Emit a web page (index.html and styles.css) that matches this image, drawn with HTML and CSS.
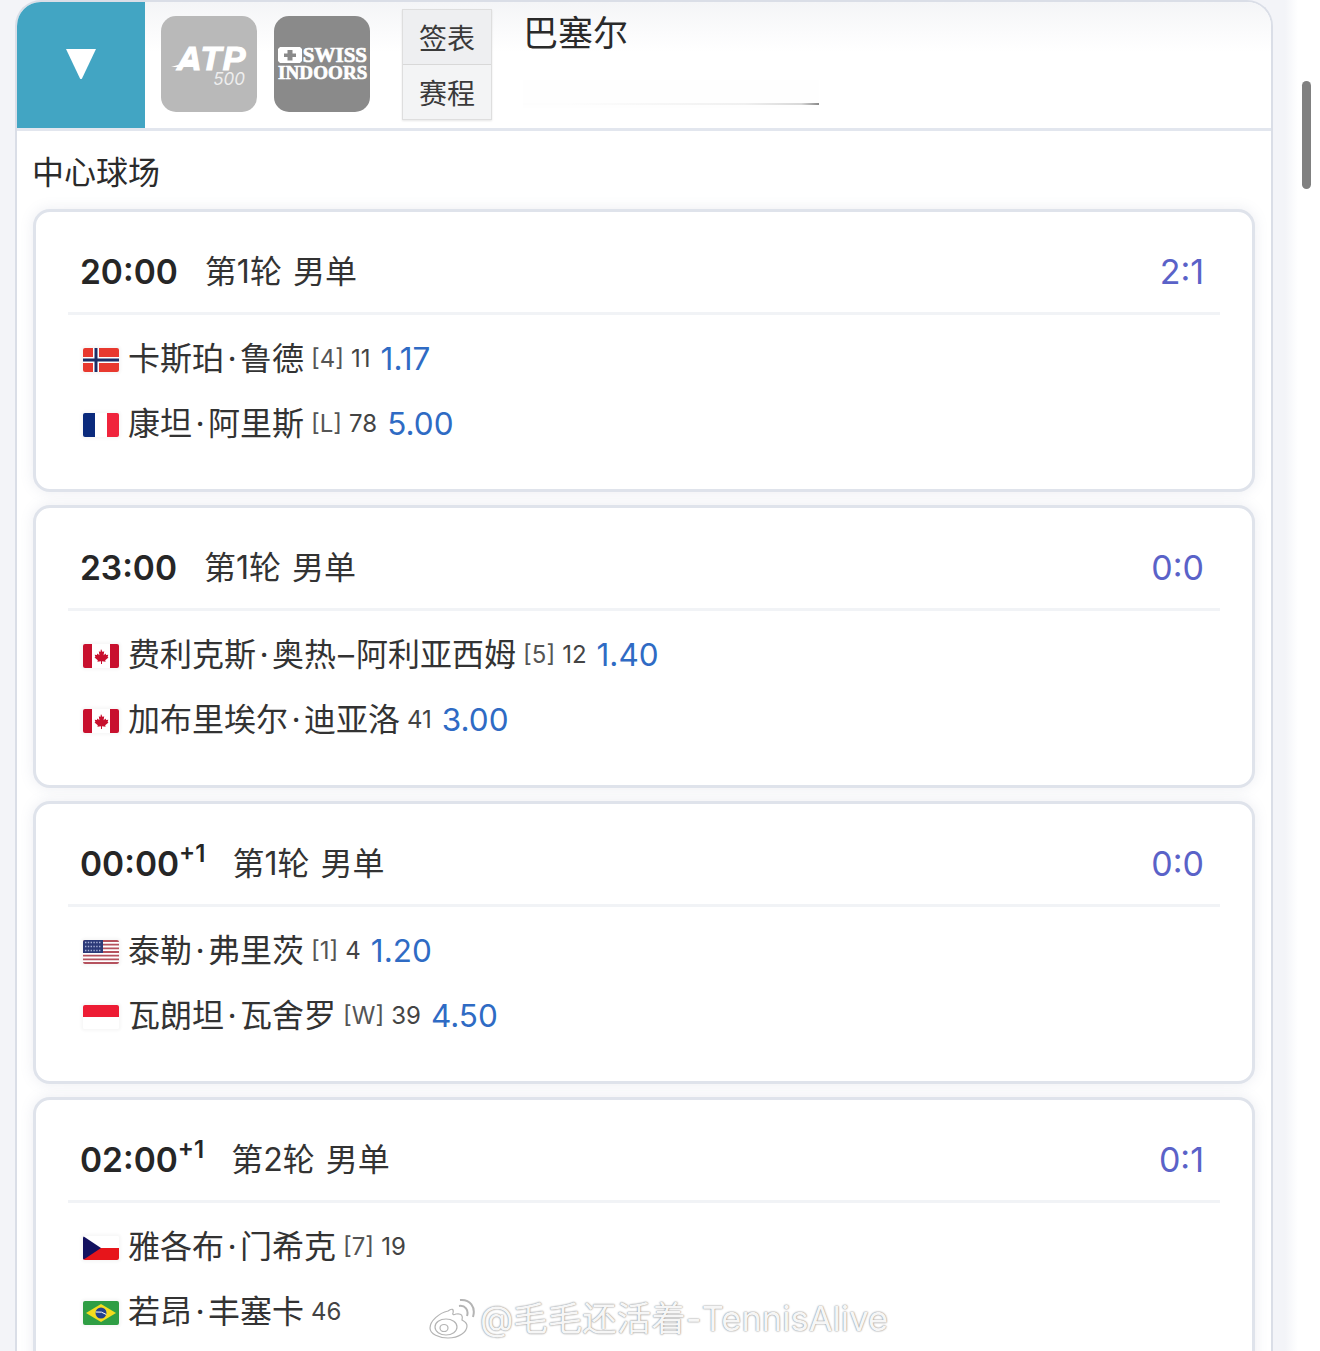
FILE: index.html
```html
<!DOCTYPE html>
<html lang="zh-CN">
<head>
<meta charset="utf-8">
<title>巴塞尔</title>
<link rel="stylesheet" href="styles.css">
</head>
<body>
<svg class="defs" width="0" height="0" aria-hidden="true">
  <symbol id="flag-ca" viewBox="0 0 36 24">
    <rect width="36" height="24" fill="#fff"/>
    <rect width="9" height="24" fill="#c8102e"/>
    <rect x="27" width="9" height="24" fill="#c8102e"/>
    <path d="M18 5l1.600 3 1.600-.8-.6 4 2-1.600.5 1.500 2.200-.4-.7 2.300.9.5-3.300 2.800.4 1.500-3.600-.5V20h-1v-2.700l-3.600.5.4-1.500-3.300-2.800.9-.5-.7-2.300 2.200.4.5-1.500 2 1.600-.6-4 1.600.8z" fill="#c8102e"/>
  </symbol>
</svg>

<div class="panel">
  <header class="top">
    <div class="toggle"><svg class="tri" viewBox="0 0 32 32"><path d="M1 1h30L17 30.500q-1 1-2 0z" fill="#fff"/></svg></div>
    <div class="logo logo-atp">
      <span class="atp">ATP</span>
      <span class="atp-num">500</span>
    </div>
    <div class="logo logo-swiss">
      <div class="swiss-line"><svg class="cross" viewBox="0 0 24 16"><path fill="#fff" fill-rule="evenodd" d="M2 0h20l2 2v12l-2 2H2l-2-2V2zM9.500 3v3.500H6v3.500h3.500V13.500h5V10H18V6.500h-3.500V3z"/></svg><span>SWISS</span></div>
      <div class="swiss-line"><span>INDOORS</span></div>
    </div>
    <div class="tabs">
      <div class="tab tab-a">签表</div>
      <div class="tab tab-b">赛程</div>
    </div>
    <div class="place">
      <div class="place-name">巴塞尔</div>
      <div class="place-blur"></div>
    </div>
  </header>

  <h2 class="court">中心球场</h2>

  <section class="card">
    <div class="head"><span class="time">20:00</span><span class="round">第1轮 男单</span><span class="score">2:1</span></div>
    <div class="row">
      <span class="flag"><svg viewBox="0 0 36 24"><rect width="36" height="24" fill="#e8392f"/><path d="M0 12h36M13 0v24" stroke="#fff" stroke-width="6"/><path d="M0 12h36M13 0v24" stroke="#1c2f66" stroke-width="3"/></svg></span>
      <span class="name">卡斯珀<i>·</i>鲁德</span><span class="seed">[4]</span><span class="rank">11</span><span class="odds">1.17</span>
    </div>
    <div class="row">
      <span class="flag"><svg viewBox="0 0 36 24"><rect width="36" height="24" fill="#fff"/><rect width="12" height="24" fill="#0a2a7c"/><rect x="24" width="12" height="24" fill="#f0243c"/></svg></span>
      <span class="name">康坦<i>·</i>阿里斯</span><span class="seed">[L]</span><span class="rank">78</span><span class="odds">5.00</span>
    </div>
  </section>

  <section class="card">
    <div class="head"><span class="time">23:00</span><span class="round">第1轮 男单</span><span class="score">0:0</span></div>
    <div class="row">
      <span class="flag"><svg viewBox="0 0 36 24"><use href="#flag-ca"/></svg></span>
      <span class="name">费利克斯<i>·</i>奥热<b>–</b>阿利亚西姆</span><span class="seed">[5]</span><span class="rank">12</span><span class="odds">1.40</span>
    </div>
    <div class="row">
      <span class="flag"><svg viewBox="0 0 36 24"><use href="#flag-ca"/></svg></span>
      <span class="name">加布里埃尔<i>·</i>迪亚洛</span><span class="rank">41</span><span class="odds">3.00</span>
    </div>
  </section>

  <section class="card">
    <div class="head"><span class="time">00:00<sup>+1</sup></span><span class="round">第1轮 男单</span><span class="score">0:0</span></div>
    <div class="row">
      <span class="flag"><svg viewBox="0 0 36 24"><rect width="36" height="24" fill="#fff"/><path d="M0 1h36M0 4.700h36M0 8.400h36M0 12h36M0 15.700h36M0 19.400h36M0 23h36" stroke="#b5525e" stroke-width="1.800"/><rect width="20" height="13" fill="#2c3a78"/><path d="M2 2.500h16M2 6.500h16M2 10.500h16" stroke="#a9b2d6" stroke-width="1.400" stroke-dasharray="1.400 1.400"/></svg></span>
      <span class="name">泰勒<i>·</i>弗里茨</span><span class="seed">[1]</span><span class="rank">4</span><span class="odds">1.20</span>
    </div>
    <div class="row">
      <span class="flag"><svg viewBox="0 0 36 24"><rect width="36" height="24" fill="#fff"/><rect width="36" height="12" fill="#ed1c34"/></svg></span>
      <span class="name">瓦朗坦<i>·</i>瓦舍罗</span><span class="seed">[W]</span><span class="rank">39</span><span class="odds">4.50</span>
    </div>
  </section>

  <section class="card">
    <div class="head"><span class="time">02:00<sup>+1</sup></span><span class="round">第2轮 男单</span><span class="score">0:1</span></div>
    <div class="row">
      <span class="flag"><svg viewBox="0 0 36 24"><rect width="36" height="12" fill="#fff"/><rect y="12" width="36" height="12" fill="#e7151b"/><path d="M0 0l18 12L0 24z" fill="#13115f"/></svg></span>
      <span class="name">雅各布<i>·</i>门希克</span><span class="seed">[7]</span><span class="rank">19</span>
    </div>
    <div class="row">
      <span class="flag"><svg viewBox="0 0 36 24"><rect width="36" height="24" fill="#2f9e44"/><path d="M18 3l15 9-15 9-15-9z" fill="#f4dc1e"/><circle cx="18" cy="12" r="5.500" fill="#23408e"/><path d="M12.800 11q6-1 10.500 2.500" stroke="#fff" stroke-width="1" fill="none"/></svg></span>
      <span class="name">若昂<i>·</i>丰塞卡</span><span class="rank">46</span>
    </div>
  </section>
</div>

<div class="thumb"></div>

<div class="mark">
  <svg class="weibo" viewBox="0 0 48 42" fill="#fff" stroke="#b4b4b4" stroke-width="1.200">
    <path d="M20 13C11 15 2 23 2 30c0 6 9 10 18 10 11 0 19-6 19-12 0-4-4-5-5-6 1-4 0-7-6-6-2 1-4 1-3-1 1-4-1-5-5-2z"/>
    <ellipse cx="18" cy="29" rx="11" ry="8"/>
    <ellipse cx="16" cy="30" rx="4" ry="3.500"/>
    <path d="M31 8c6-1 10 4 8 10M32 2c10-1 16 7 13 17" fill="none" stroke-width="2"/>
  </svg>
  <span class="mark-text">@毛毛还活着-TennisAlive</span>
</div>
</body>
</html>
```
FILE: styles.css
```css
* { box-sizing: border-box; }
html, body { margin: 0; padding: 0; }
body {
  position: relative;
  width: 1320px;
  height: 1351px;
  overflow: hidden;
  background: linear-gradient(90deg, #f3f4f8 0, #f3f4f8 1285px, #ffffff 1298px);
  font-family: Inter, "Noto Sans CJK SC", sans-serif;
  color: #2b2b2b;
}
.defs { position: absolute; }
.panel {
  width: 1258px;
  min-height: 1400px;
  margin-left: 15px;
  background: #fff;
  border: 2px solid #dadee7;
  border-bottom: 0;
  border-radius: 26px 26px 0 0;
  overflow: hidden;
  padding-bottom: 40px;
}
.top {
  display: flex;
  height: 129px;
  border-bottom: 3px solid #e2e6ee;
  background: linear-gradient(180deg, #f4f5f7 0, #fbfbfc 30px, #fff 50px);
}
.toggle {
  width: 128px;
  background: #42a5c3;
  display: flex;
  align-items: center;
  justify-content: center;
  margin-top: -2px;
}
.tri { width: 32px; height: 32px; }
.logo {
  width: 96px;
  height: 96px;
  margin-top: 14px;
  border-radius: 15px;
  color: #fff;
  flex: none;
}
.logo-atp {
  position: relative;
  margin-left: 16px;
  background: #b9b9b9;
  display: flex;
  flex-direction: column;
  align-items: center;
  padding-top: 28px;
}
.logo-atp::before {
  content: "";
  position: absolute;
  left: 10px;
  top: 44px;
  width: 24px;
  height: 7px;
  background: #fff;
  clip-path: polygon(0 100%, 100% 0, 100% 100%);
}
.atp {
  font: italic 700 34px/28px "Liberation Sans", sans-serif;
  letter-spacing: 1.500px;
  -webkit-text-stroke: 1.200px #fff;
  margin-left: 6px;
}
.atp-num {
  font: italic 400 17px/14px Inter, sans-serif;
  align-self: flex-end;
  margin: 0 12px 0 0;
  color: #eee;
}
.logo-swiss {
  margin-left: 17px;
  background: #8a8a8a;
  padding: 30px 3px 0 4px;
  display: flex;
  flex-direction: column;
}
.swiss-line {
  display: flex;
  align-items: center;
  justify-content: space-between;
  font: 700 21px/18px "Liberation Serif", serif;
  -webkit-text-stroke: .7px #fff;
  white-space: nowrap;
}
.swiss-line + .swiss-line { font-size: 19px; letter-spacing: .1px; }
.cross { width: 24px; height: 16px; flex: none; }
.tabs {
  width: 90px;
  height: 111px;
  margin: 7px 0 0 32px;
  flex: none;
  border: 1px solid #dedede;
  box-shadow: 0 1px 2px rgba(0, 0, 0, .1);
  font: 400 28px/1 "Noto Sans CJK SC", sans-serif;
  color: #3a3a3a;
}
.tab { display: flex; align-items: center; justify-content: center; }
.tab-a { height: 55px; background: #eeeff1; border-bottom: 1px solid #d8d8d8; }
.tab-b { height: 54px; background: #f3f4f5; }
.place { margin-left: 31px; flex: 1; }
.place-name {
  font: 400 35px/40px "Noto Sans CJK SC", sans-serif;
  margin-top: 9px;
  color: #2a2a2a;
}
.place-blur {
  display: flex;
  align-items: flex-end;
  width: 296px;
  height: 28px;
  margin-top: 29px;
  padding-bottom: 3px;
  background: #fefefe;
}
.place-blur::after {
  content: "";
  flex: 1;
  height: 2px;
  background: linear-gradient(90deg, #fdfdfd 15%, #f0f0f0 75%, #d8d8d8 94%, #888 100%);
}
.court {
  margin: 0;
  padding: 18px 0 0 15px;
  height: 78px;
  font: 400 32px/42px "Noto Sans CJK SC", sans-serif;
  color: #2b2b2b;
}
.card {
  width: 1222px;
  height: 283px;
  margin: 0 0 13px 16px;
  padding: 0 32px;
  background: #fff;
  border: 3px solid #dfe3eb;
  border-radius: 17px;
  box-shadow: 0 0 14px rgba(120, 130, 160, .14);
}
.head {
  display: flex;
  align-items: center;
  height: 103px;
  padding: 19px 16px 0 12px;
  border-bottom: 3px solid #f1f3f6;
}
.time {
  font: 600 33.500px/40px Inter, sans-serif;
  color: #262626;
  white-space: nowrap;
}
.time sup { font-size: 24px; line-height: 0; vertical-align: 14px; }
.round {
  margin-left: 27px;
  font: 400 32px/40px Inter, "Noto Sans CJK SC", sans-serif;
  white-space: pre;
  word-spacing: 2px;
  color: #333;
}
.score {
  margin-left: auto;
  font: 400 34px/40px Inter, sans-serif;
  color: #5a62c8;
}
.row {
  display: flex;
  align-items: center;
  height: 65px;
  padding-left: 15px;
  white-space: nowrap;
}
.head + .row { margin-top: 10px; }
.flag {
  display: flex;
  width: 36px;
  height: 24px;
  flex: none;
  margin: 5px 9px 0 0;
  border-radius: 2px;
  overflow: hidden;
  box-shadow: 0 0 3px 2px rgba(0, 0, 0, .035);
}
.flag svg { width: 36px; height: 24px; display: block; }
.name {
  font: 400 32px/44px "Noto Sans CJK SC", sans-serif;
  color: #333;
  margin-bottom: 1px;
}
.name i {
  font: 400 32px/44px Inter, sans-serif;
  display: inline-block;
  width: 16px;
  text-align: center;
}
.name b {
  font: 400 32px/44px Inter, sans-serif;
  display: inline-block;
  width: 20px;
  text-align: center;
}
.seed {
  margin: 3px 0 0 7px;
  font: 400 24px/30px Inter, sans-serif;
  color: #555;
}
.rank {
  margin: 3px 0 0 7px;
  font: 400 24px/30px Inter, sans-serif;
  color: #444;
}
.odds {
  margin: 2px 0 0 10px;
  font: 400 31.500px/40px Inter, sans-serif;
  color: #2f6bc4;
}
.thumb {
  position: absolute;
  left: 1302px;
  top: 81px;
  width: 9px;
  height: 108px;
  border-radius: 5px;
  background: #808080;
}
.mark {
  position: absolute;
  left: 428px;
  top: 1296px;
  display: flex;
  align-items: center;
  height: 46px;
}
.weibo { width: 48px; height: 42px; flex: none; }
.mark-text {
  margin-left: 4px;
  font: 400 34.500px/46px Inter, "Noto Sans CJK SC", sans-serif;
  color: #f6f6f6;
  text-shadow: 0 0 2px #8a8a8a, 0 0 1px #a8a8a8;
  white-space: nowrap;
}
```
